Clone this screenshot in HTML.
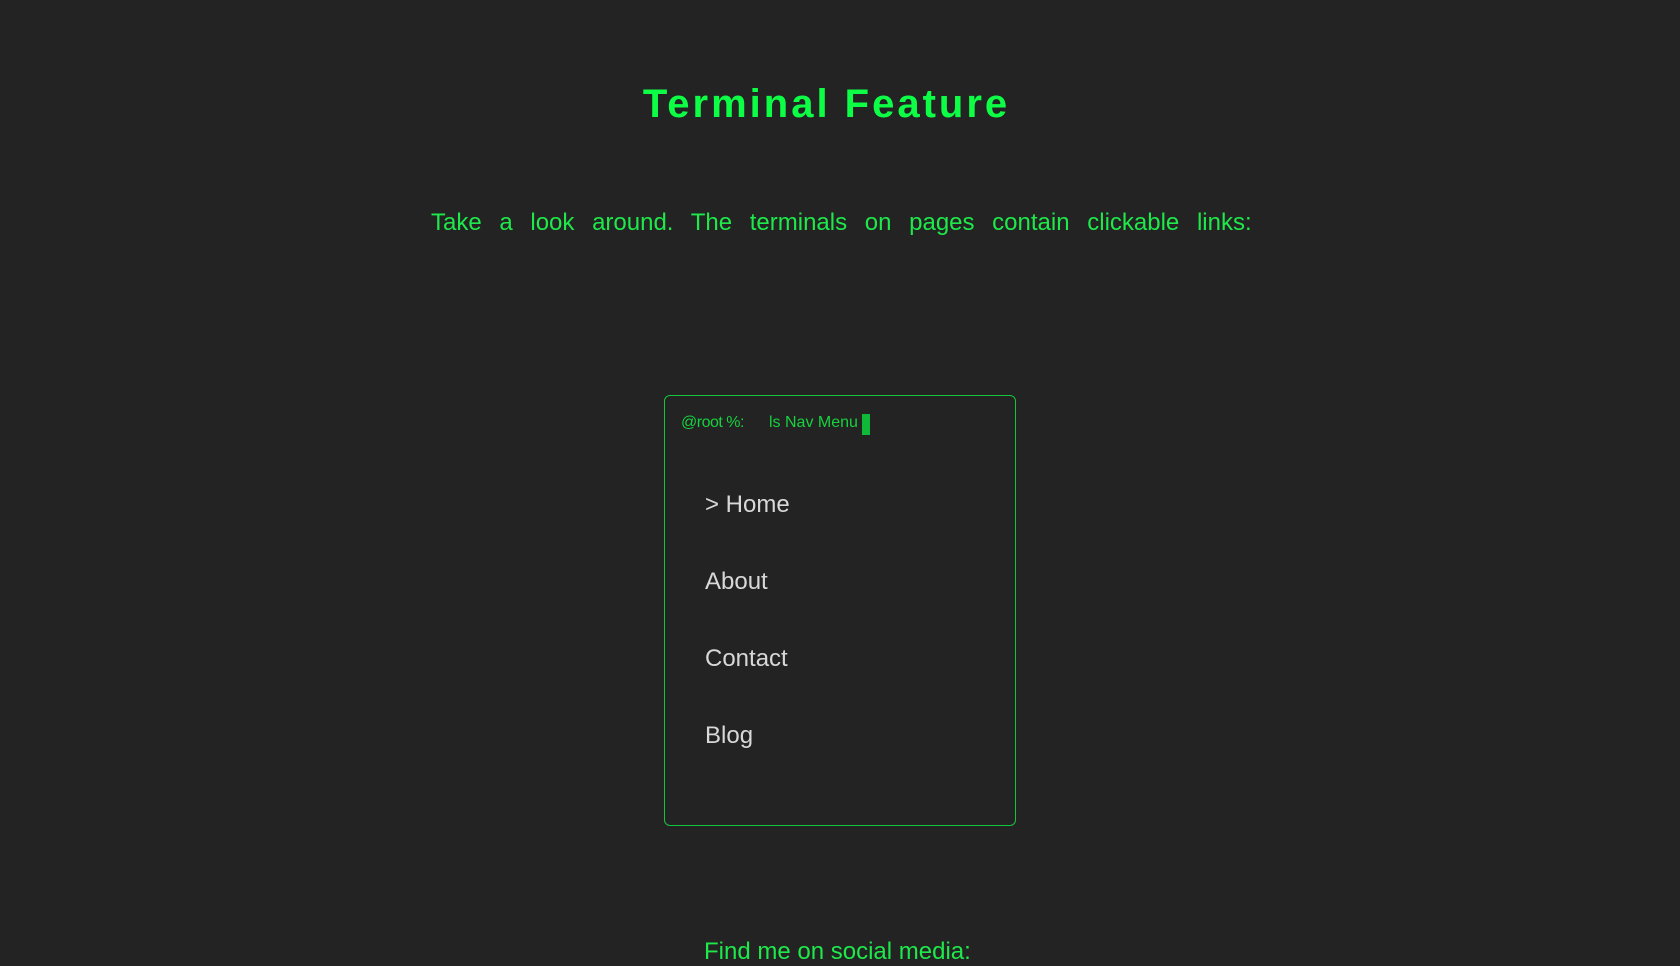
<!DOCTYPE html>
<html><head><meta charset="utf-8"><style>
html,body{margin:0;padding:0;background:#232323;width:1680px;height:963px;overflow:hidden;font-family:"Liberation Sans",sans-serif;}
.t{position:absolute;white-space:nowrap;}
h1{position:absolute;left:0;width:1653px;text-align:center;top:82px;margin:0;font-size:40px;font-weight:bold;color:#0dff45;letter-spacing:3px;}
.sub{left:431px;top:209px;font-size:24px;color:#1ee84a;word-spacing:11px;}
.box{position:absolute;left:664px;top:395px;width:352px;height:431px;border:1px solid #16c43c;border-radius:6px;box-sizing:border-box;}
.p{font-size:16px;color:#16d23e;top:414px;}
.cur{position:absolute;left:862px;top:414px;width:8px;height:21px;background:#10b837;}
.m{left:705px;font-size:24px;color:#d8d8d8;}
.f{left:704px;top:938px;font-size:24px;color:#1ee84a;}
</style></head><body>
<h1>Terminal Feature</h1>
<div class="t sub">Take a look around. The terminals on pages contain clickable links:</div>
<div class="box"></div>
<div class="t p" style="left:681px;letter-spacing:-0.5px">@root %:</div>
<div class="t p" style="left:769px">ls Nav Menu</div>
<div class="cur"></div>
<div class="t m" style="top:491px">&gt; Home</div>
<div class="t m" style="top:568px">About</div>
<div class="t m" style="top:645px">Contact</div>
<div class="t m" style="top:722px">Blog</div>
<div class="t f">Find me on social media:</div>
</body></html>
